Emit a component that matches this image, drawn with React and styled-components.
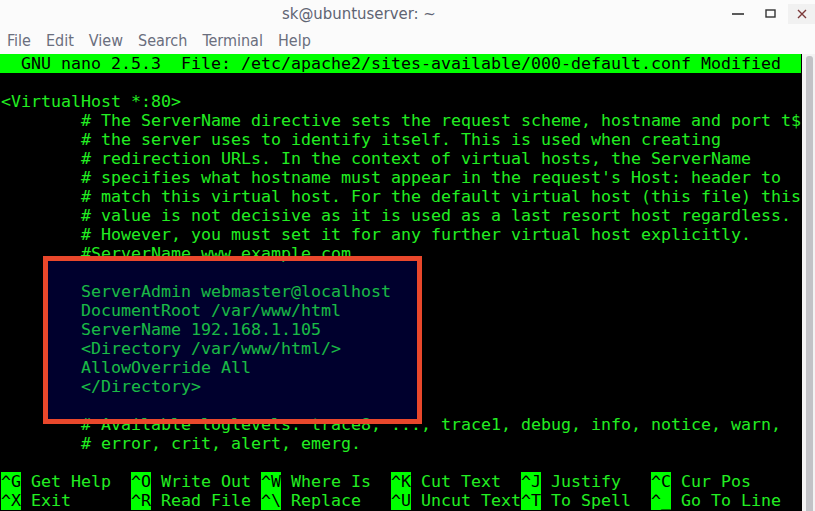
import React from 'react'
import styled, { createGlobalStyle } from 'styled-components'

const GlobalStyle = createGlobalStyle`
html, body {
  margin:0;
  padding:0;
  background:#fbfbfb;
  overflow:hidden;
}
`

const Window = styled.div`
width:815px;
height:511px;
display:flex;
flex-direction:column;
background:#fbfbfb;
`

const TitleBar = styled.div`
height:27px;
display:flex;
align-items:center;
font-family:"DejaVu Sans Condensed","DejaVu Sans",sans-serif;
`

const Title = styled.div`
margin-left:282px;
font-size:16.6px;
color:#5f6473;
`

const Controls = styled.div`
margin-left:auto;
display:flex;
align-items:center;
height:27px;
`

const Ctl = styled.div`
width:${p => p.w}px;
height:20px;
display:flex;
align-items:center;
justify-content:center;
background:${p => p.hot ? '#f1f1f1' : 'transparent'};
margin-right:${p => p.mr || 0}px;
`

const MenuBar = styled.div`
height:27px;
display:flex;
align-items:center;
font-family:"DejaVu Sans Condensed","DejaVu Sans",sans-serif;
font-size:16px;
color:#6a6e7d;
`

const MenuItem = styled.span`
padding:0 7.5px;
&:first-child{
  padding-left:7px;
}
`

const Main = styled.div`
flex:1;
display:flex;
`

const Terminal = styled.div`
position:relative;
width:801px;
padding-left:1px;
background:#000;
font-family:"DejaVu Sans Mono",monospace;
font-size:16.61px;
color:#22ee22;
`

const Row = styled.div`
height:19px;
line-height:19px;
white-space:pre;
`

const Header = styled(Row)`
background:#00ff00;
color:#000;
margin-left:-1px;
padding-left:1px;
width:800px;
`

const Shortcuts = styled.div`
display:grid;
grid-template-columns:repeat(6,130px);
`

const Cell = styled.div`
height:19px;
line-height:19px;
white-space:pre;
`

const Key = styled.span`
background:#00ff00;
color:#000;
`

const Highlight = styled.div`
position:absolute;
left:43px;
top:202px;
width:379px;
height:168px;
box-sizing:border-box;
border:5px solid #e9472b;
background:rgba(0,0,204,0.22);
pointer-events:none;
`

const ScrollStrip = styled.div`
flex:1;
background:#f3f3f3;
padding-top:2px;
display:flex;
justify-content:flex-end;
padding-right:2px;
`

const Thumb = styled.div`
width:7px;
background:#c2c2c6;
border-radius:3px 3px 0 0;
`

const lines = [
  '',
  '<VirtualHost *:80>',
  "        # The ServerName directive sets the request scheme, hostname and port t$",
  '        # the server uses to identify itself. This is used when creating',
  '        # redirection URLs. In the context of virtual hosts, the ServerName',
  "        # specifies what hostname must appear in the request's Host: header to",
  '        # match this virtual host. For the default virtual host (this file) this',
  '        # value is not decisive as it is used as a last resort host regardless.',
  '        # However, you must set it for any further virtual host explicitly.',
  '        #ServerName www.example.com',
  '',
  '        ServerAdmin webmaster@localhost',
  '        DocumentRoot /var/www/html',
  '        ServerName 192.168.1.105',
  '        <Directory /var/www/html/>',
  '        AllowOverride All',
  '        </Directory>',
  '',
  '        # Available loglevels: trace8, ..., trace1, debug, info, notice, warn,',
  '        # error, crit, alert, emerg.',
  '',
]

const shortcuts = [
  ['^G', 'Get Help'], ['^O', 'Write Out'], ['^W', 'Where Is'],
  ['^K', 'Cut Text'], ['^J', 'Justify'], ['^C', 'Cur Pos'],
  ['^X', 'Exit'], ['^R', 'Read File'], ['^\\', 'Replace'],
  ['^U', 'Uncut Text'], ['^T', 'To Spell'], ['^_', 'Go To Line'],
]

const App = () => {
  return (
    <Window>
      <GlobalStyle />
      <TitleBar>
        <Title>sk@ubuntuserver: ~</Title>
        <Controls>
          <Ctl w={20} mr={12}>
            <svg width="12" height="4"><line x1="0" y1="2" x2="12" y2="2" stroke="#333" strokeWidth="1.6" /></svg>
          </Ctl>
          <Ctl w={20} mr={8}>
            <svg width="11" height="9"><rect x="1" y="1" width="9" height="7" fill="none" stroke="#333" strokeWidth="1.4" /></svg>
          </Ctl>
          <Ctl w={27} hot>
            <svg width="10" height="10"><path d="M1 1 L9 9 M9 1 L1 9" stroke="#7b3a3a" strokeWidth="1.4" /></svg>
          </Ctl>
        </Controls>
      </TitleBar>
      <MenuBar>
        <MenuItem>File</MenuItem>
        <MenuItem>Edit</MenuItem>
        <MenuItem>View</MenuItem>
        <MenuItem>Search</MenuItem>
        <MenuItem>Terminal</MenuItem>
        <MenuItem>Help</MenuItem>
      </MenuBar>
      <Main>
        <Terminal>
          <Header>{'  GNU nano 2.5.3  File: /etc/apache2/sites-available/000-default.conf Modified  '}</Header>
          {lines.map((l, i) => <Row key={i}>{l}</Row>)}
          <Shortcuts>
            {shortcuts.map(([k, label]) => (
              <Cell key={k}><Key>{k}</Key>{' ' + label}</Cell>
            ))}
          </Shortcuts>
          <Highlight />
        </Terminal>
        <ScrollStrip>
          <Thumb />
        </ScrollStrip>
      </Main>
    </Window>
  )
}

export default App
